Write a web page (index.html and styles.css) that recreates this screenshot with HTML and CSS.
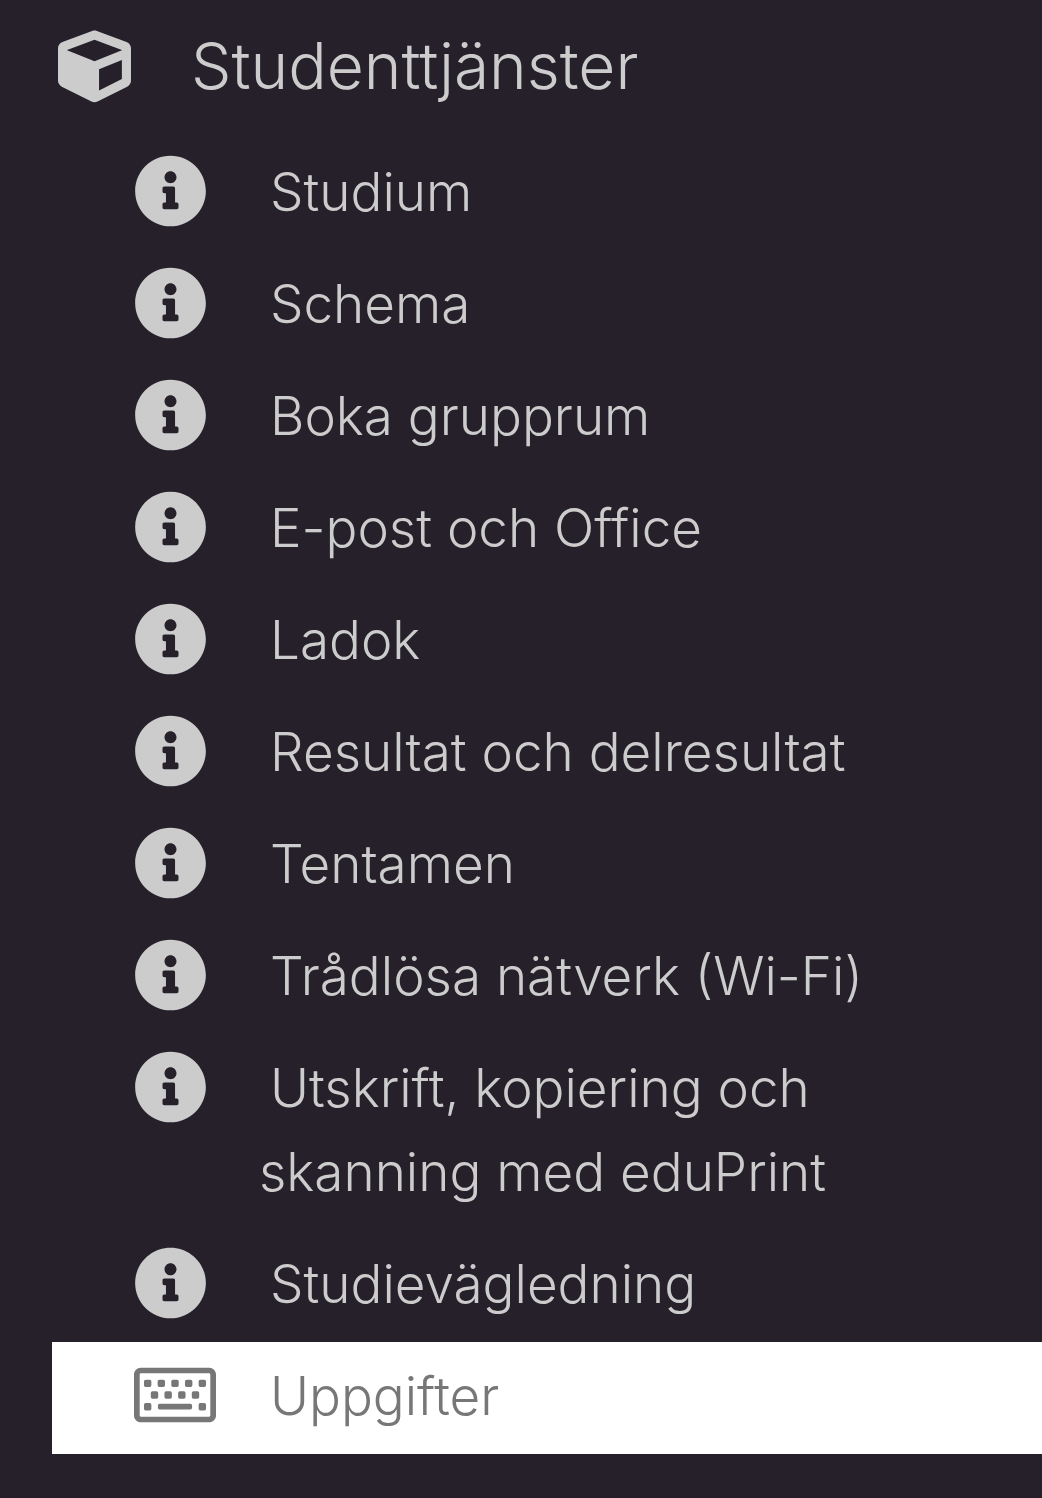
FILE: index.html
```
<!DOCTYPE html>
<html lang="sv">
<head>
<meta charset="utf-8">
<meta name="viewport" content="width=device-width, initial-scale=1">
<title>Studenttjänster</title>
<link rel="stylesheet" href="styles.css">
</head>
<body>
<svg class="sprite" aria-hidden="true">
  <symbol id="info" viewBox="0 0 512 512"><path d="M256 8C119.043 8 8 119.083 8 256c0 136.997 111.043 248 248 248s248-111.003 248-248C504 119.083 392.957 8 256 8zm0 110c23.196 0 42 18.804 42 42s-18.804 42-42 42-42-18.804-42-42 18.804-42 42-42zm56 254c0 6.627-5.373 12-12 12h-88c-6.627 0-12-5.373-12-12v-24c0-6.627 5.373-12 12-12h12v-64h-12c-6.627 0-12-5.373-12-12v-24c0-6.627 5.373-12 12-12h64c6.627 0 12 5.373 12 12v100h12c6.627 0 12 5.373 12 12v24z"/></symbol>
  <symbol id="cube" viewBox="0 0 512 512"><path d="M239.1 6.3l-208 78c-18.700 7-31.100 25-31.100 45v225.100c0 18.200 10.300 34.800 26.500 42.900l208 104c13.500 6.800 29.400 6.800 42.900 0l208-104c16.300-8.100 26.500-24.800 26.500-42.900V129.300c0-20-12.400-37.900-31.100-44.900l-208-78C262 2.200 250 2.200 239.100 6.300zM256 68.400l192 72v1.100l-192 78-192-78v-1.100l192-72zm32 356V275.500l160-65v133.900l-160 80z"/></symbol>
  <symbol id="keyboard" viewBox="0 0 576 512"><path d="M528 448H48c-26.510 0-48-21.490-48-48V112c0-26.510 21.490-48 48-48h480c26.510 0 48 21.490 48 48v288c0 26.510-21.490 48-48 48zM48 104a8 8 0 0 0-8 8v288a8 8 0 0 0 8 8h480a8 8 0 0 0 8-8V112a8 8 0 0 0-8-8z"/><path d="M82 148h28a12 12 0 0 1 12 12v28a12 12 0 0 1-12 12H82a12 12 0 0 1-12-12v-28a12 12 0 0 1 12-12zm96 0h28a12 12 0 0 1 12 12v28a12 12 0 0 1-12 12h-28a12 12 0 0 1-12-12v-28a12 12 0 0 1 12-12zm96 0h28a12 12 0 0 1 12 12v28a12 12 0 0 1-12 12h-28a12 12 0 0 1-12-12v-28a12 12 0 0 1 12-12zm96 0h28a12 12 0 0 1 12 12v28a12 12 0 0 1-12 12h-28a12 12 0 0 1-12-12v-28a12 12 0 0 1 12-12zm96 0h28a12 12 0 0 1 12 12v28a12 12 0 0 1-12 12h-28a12 12 0 0 1-12-12v-28a12 12 0 0 1 12-12zM130 230h28a12 12 0 0 1 12 12v28a12 12 0 0 1-12 12h-28a12 12 0 0 1-12-12v-28a12 12 0 0 1 12-12zm96 0h28a12 12 0 0 1 12 12v28a12 12 0 0 1-12 12h-28a12 12 0 0 1-12-12v-28a12 12 0 0 1 12-12zm96 0h28a12 12 0 0 1 12 12v28a12 12 0 0 1-12 12h-28a12 12 0 0 1-12-12v-28a12 12 0 0 1 12-12zm96 0h28a12 12 0 0 1 12 12v28a12 12 0 0 1-12 12h-28a12 12 0 0 1-12-12v-28a12 12 0 0 1 12-12zM82 312h28a12 12 0 0 1 12 12v28a12 12 0 0 1-12 12H82a12 12 0 0 1-12-12v-28a12 12 0 0 1 12-12zm384 0h28a12 12 0 0 1 12 12v28a12 12 0 0 1-12 12h-28a12 12 0 0 1-12-12v-28a12 12 0 0 1 12-12zM180 318h216a12 12 0 0 1 12 12v16a12 12 0 0 1-12 12H180a12 12 0 0 1-12-12v-16a12 12 0 0 1 12-12z"/></symbol>
</svg>
<nav class="menu" aria-label="Studenttjänster">
  <a class="heading" href="#"><svg class="cube" aria-hidden="true"><use href="#cube"/></svg><span class="title">Studenttjänster</span></a>
  <ul class="list">
    <li><a class="item" href="#"><svg class="icon" aria-hidden="true"><use href="#info"/></svg><span class="label">Studium</span></a></li>
    <li><a class="item" href="#"><svg class="icon" aria-hidden="true"><use href="#info"/></svg><span class="label">Schema</span></a></li>
    <li><a class="item" href="#"><svg class="icon" aria-hidden="true"><use href="#info"/></svg><span class="label">Boka grupprum</span></a></li>
    <li><a class="item" href="#"><svg class="icon" aria-hidden="true"><use href="#info"/></svg><span class="label">E-post och Office</span></a></li>
    <li><a class="item" href="#"><svg class="icon" aria-hidden="true"><use href="#info"/></svg><span class="label">Ladok</span></a></li>
    <li><a class="item" href="#"><svg class="icon" aria-hidden="true"><use href="#info"/></svg><span class="label">Resultat och delresultat</span></a></li>
    <li><a class="item" href="#"><svg class="icon" aria-hidden="true"><use href="#info"/></svg><span class="label">Tentamen</span></a></li>
    <li><a class="item" href="#"><svg class="icon" aria-hidden="true"><use href="#info"/></svg><span class="label">Trådlösa nätverk (Wi-Fi)</span></a></li>
    <li><a class="item" href="#"><svg class="icon" aria-hidden="true"><use href="#info"/></svg><span class="label">Utskrift, kopiering och<br>skanning med eduPrint</span></a></li>
    <li><a class="item" href="#"><svg class="icon" aria-hidden="true"><use href="#info"/></svg><span class="label">Studievägledning</span></a></li>
    <li><a class="item active" href="#" aria-current="page"><svg class="icon wide" aria-hidden="true"><use href="#keyboard"/></svg><span class="label">Uppgifter</span></a></li>
  </ul>
</nav>
</body>
</html>
```
FILE: styles.css
```
body {
  margin: 0;
  background: #25202a;
  color: #ccc;
  font-family: Inter, "Open Sans", sans-serif;
  font-weight: 300;
}

.sprite {
  display: none;
}

.menu {
  padding-bottom: 44px;
}

.heading,
.item {
  display: flex;
  color: inherit;
  text-decoration: none;
}

.heading {
  align-items: center;
  gap: 60px;
  padding: 17px 24px 23px 58px;
  font-size: 64px;
  line-height: 98px;
}

.cube {
  flex: none;
  width: 73px;
  height: 73px;
  fill: currentColor;
}

.list {
  margin: 0 0 0 52px;
  padding: 0;
  list-style: none;
}

.item {
  padding: 11px 24px 16px 82px;
  font-size: 53px;
  line-height: 84px;
}

.icon {
  flex: none;
  width: 73px;
  height: 84px;
  margin-right: 52px;
  fill: currentColor;
}

.wide {
  width: 82px;
  margin-right: 43px;
}

.label {
  padding-top: 1px;
  text-indent: 11px;
}

.active {
  background: #fff;
  color: #777;
}
```
